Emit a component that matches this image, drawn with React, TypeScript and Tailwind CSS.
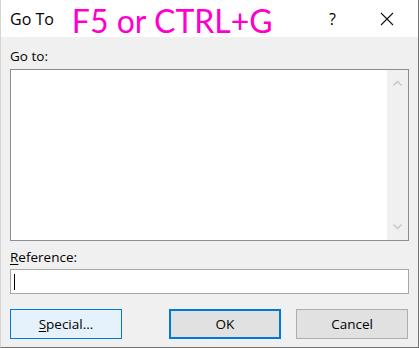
import React from "react";

const ui = { fontFamily: '"Open Sans", "Noto Sans", sans-serif' };

function Chevron({ up }: { up?: boolean }) {
  return (
    <svg width="9" height="6" viewBox="0 0 9 6" className="block">
      <path
        d={up ? "M0.5 5.5 L4.5 1.5 L8.5 5.5" : "M0.5 0.5 L4.5 4.5 L8.5 0.5"}
        fill="none"
        stroke="#c4c4c4"
        strokeWidth="1.3"
      />
    </svg>
  );
}

export default function App() {
  return (
    <div
      className="flex h-[348px] w-[419px] flex-col border-r border-b border-l border-r-[#707070] border-b-[#707070] border-l-[#d4d4d4] bg-[#f0f0f0] text-black"
      style={ui}
    >
      <div className="flex h-[37px] items-center bg-white">
        <span className="ml-[9px] text-[16px] leading-none">Go To</span>
        <span
          className="ml-[18px] mt-[4px] text-[32px] leading-none text-[#ff00cc]"
          style={{ fontFamily: "Lato, sans-serif" }}
        >
          F5 or CTRL+G
        </span>
        <span className="ml-auto mr-[44px] text-[16px] leading-none">?</span>
        <svg width="14" height="14" viewBox="0 0 14 14" className="mr-[24px]">
          <path d="M1 1 L13 13 M13 1 L1 13" stroke="#111" strokeWidth="1.1" />
        </svg>
      </div>

      <div className="flex flex-1 flex-col pl-[9px] pr-[9px]">
        <div className="mt-[9px] text-[13.5px] leading-[20px]">Go to:</div>
        <div className="mt-[3px] flex h-[172px] border border-[#8a8d93] bg-white">
          <div className="flex-1" />
          <div className="flex w-[21px] flex-col items-center justify-between bg-[#f0f0f0] py-[10px]">
            <Chevron up />
            <Chevron />
          </div>
        </div>

        <div className="mt-[6px] text-[13.5px] leading-[20px]">
          <span className="underline underline-offset-2">R</span>eference:
        </div>
        <div className="mt-[2px] flex h-[25px] items-center border border-[#a8a8a8] bg-white pl-[3px]">
          <div className="h-[16px] w-px bg-black" />
        </div>

        <div className="mt-[15px] flex h-[30px] text-[13.5px]">
          <button className="flex w-[112px] items-center justify-center border border-[#0078d7] bg-[#e5f1fb]">
            <span>
              <span className="underline underline-offset-2">S</span>pecial...
            </span>
          </button>
          <button className="ml-[47px] flex w-[112px] items-center justify-center border-2 border-[#0078d7] bg-[#e1e1e1]">
            OK
          </button>
          <button className="ml-[15px] flex w-[112px] items-center justify-center border border-[#adadad] bg-[#e1e1e1]">
            Cancel
          </button>
        </div>
      </div>
    </div>
  );
}
